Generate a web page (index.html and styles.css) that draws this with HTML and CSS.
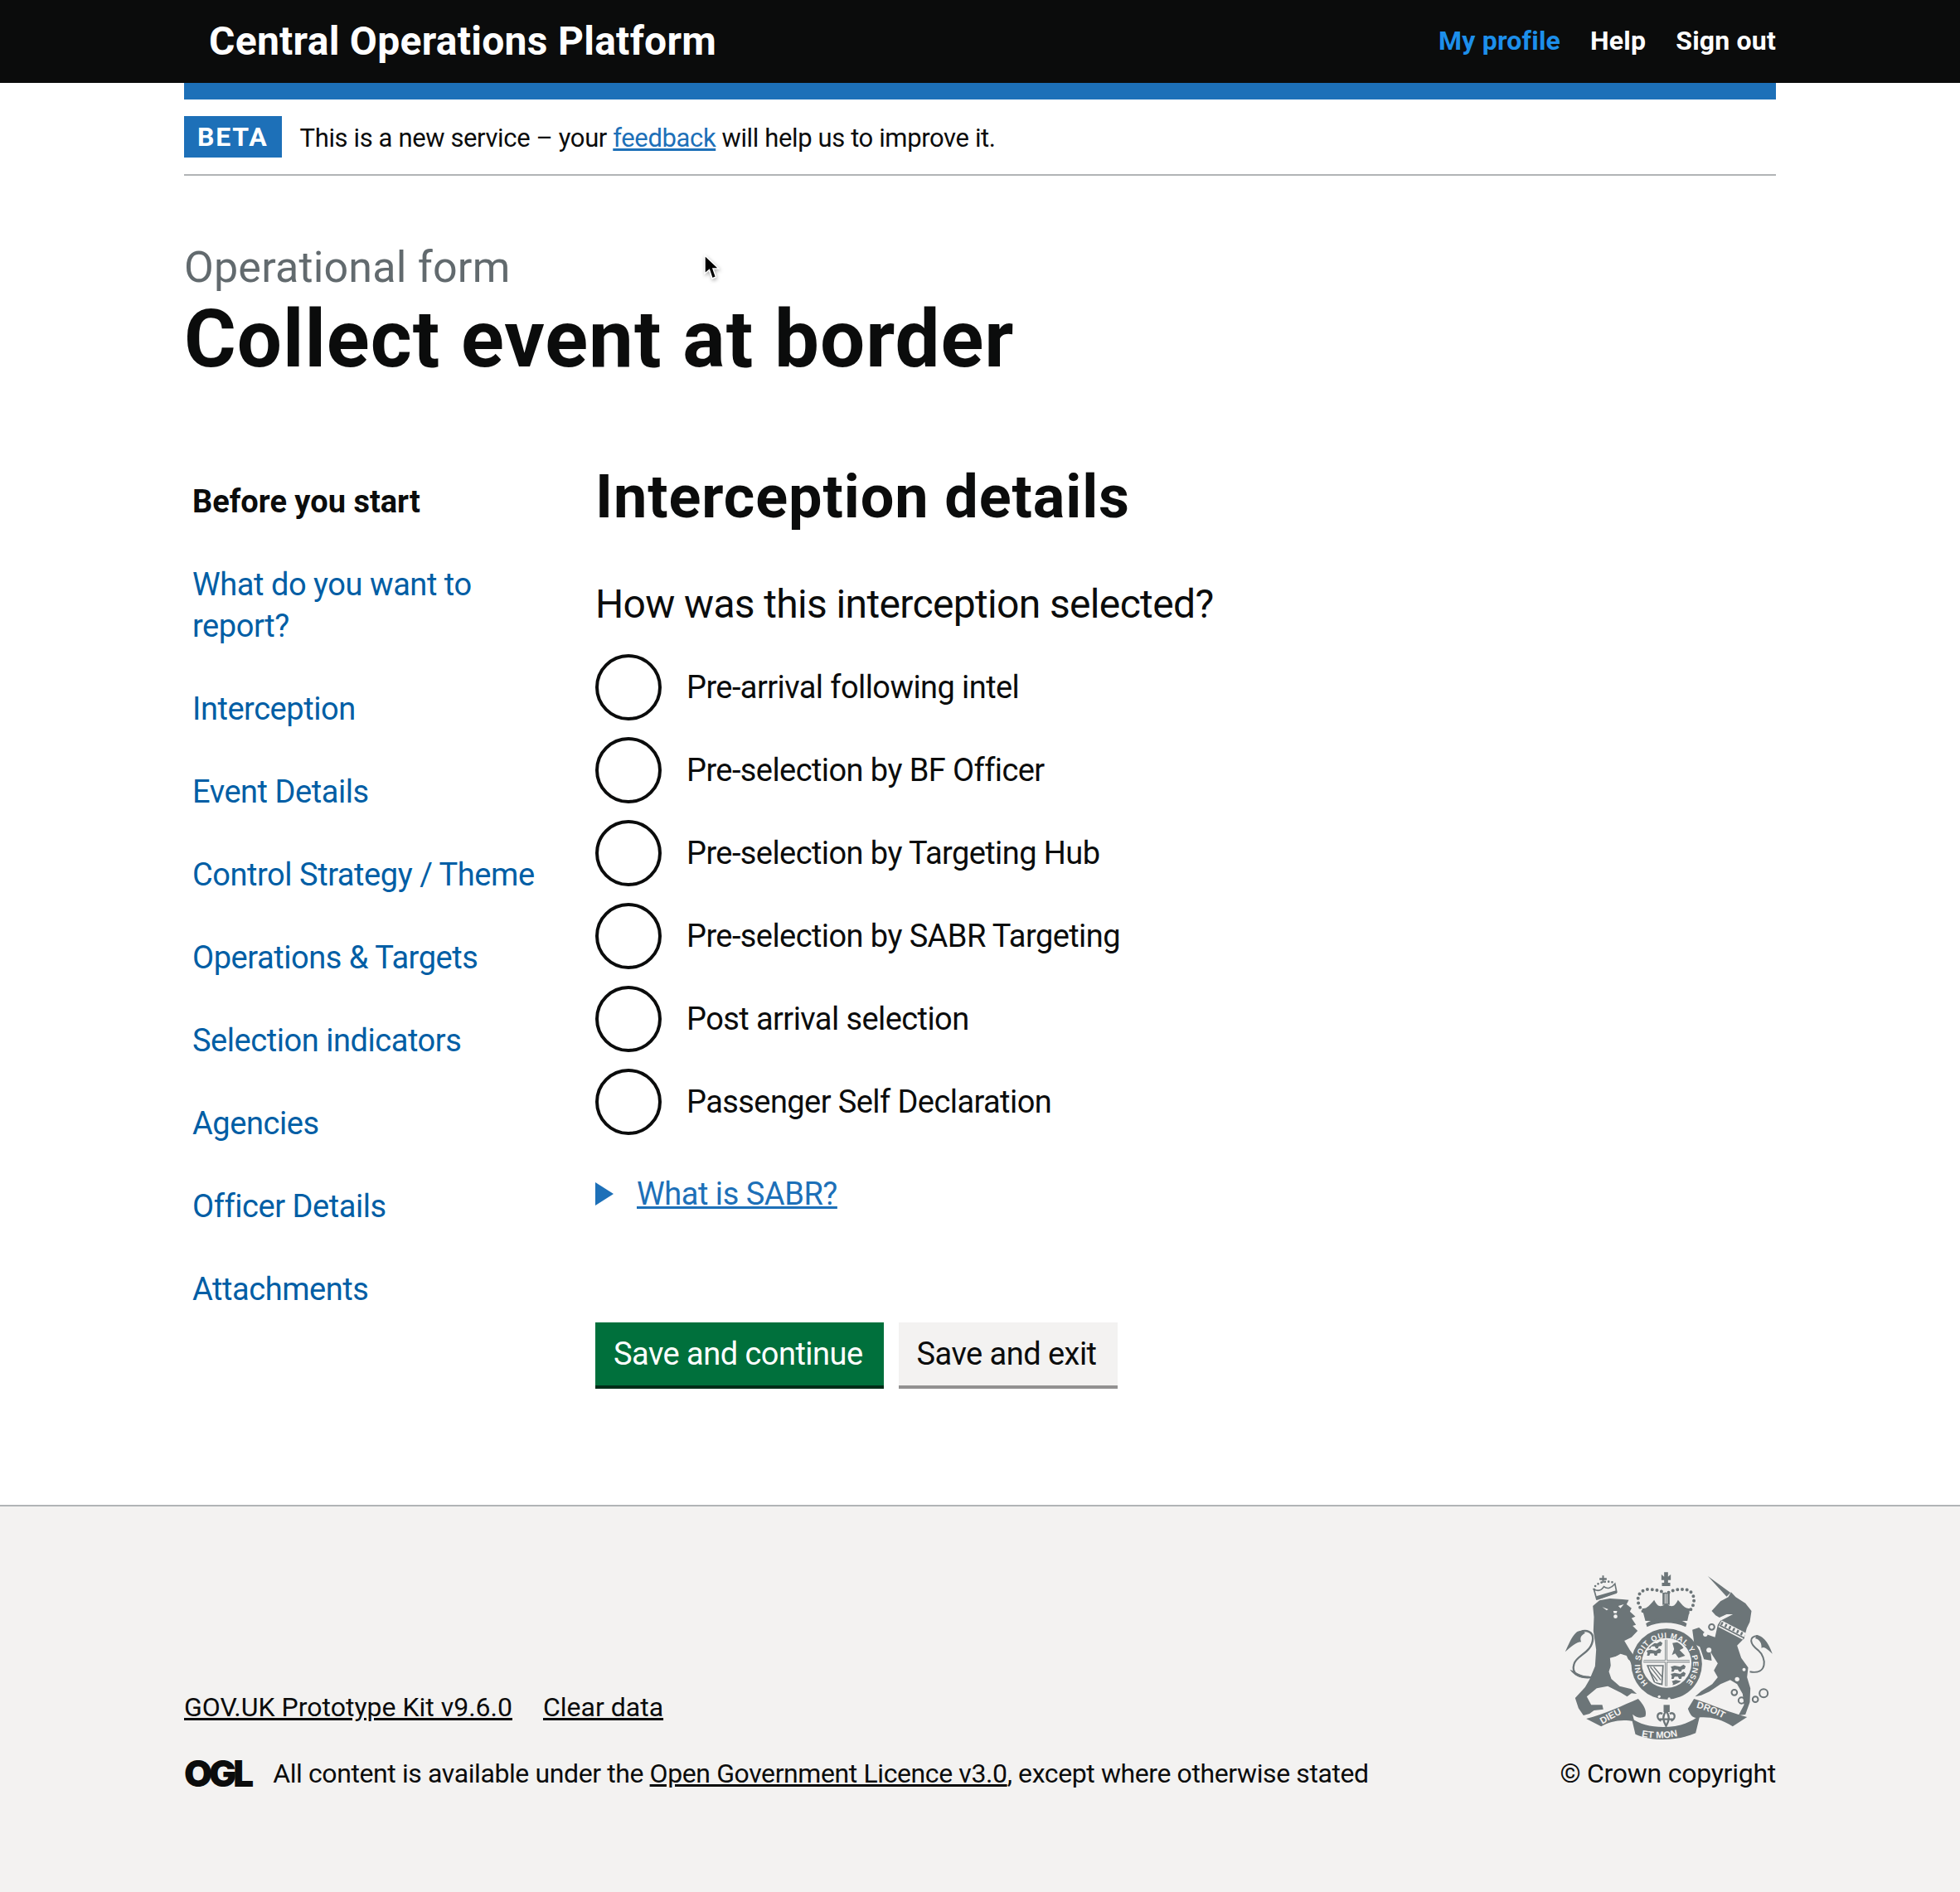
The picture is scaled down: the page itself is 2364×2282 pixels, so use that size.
FILE: index.html
```html
<!DOCTYPE html>
<html lang="en">
<head>
    <meta charset="UTF-8">
    <title>Collect event at border</title>
    <link rel="stylesheet" href="styles.css">
</head>
<body>
    <header class="top-bar">
        <div class="container top-bar-inner">
            <a class="service-name" href="#">Central Operations Platform</a>
            <nav class="top-nav">
                <a class="active" href="#">My profile</a>
                <a href="#">Help</a>
                <a href="#">Sign out</a>
            </nav>
        </div>
    </header>

    <div class="container">
        <div class="blue-strip"></div>
        <div class="phase-banner">
            <strong class="phase-tag">BETA</strong>
            <span class="phase-text">This is a new service – your <a href="#">feedback</a> will help us to improve it.</span>
        </div>

        <span class="caption">Operational form</span>
        <h1>Collect event at border</h1>

        <div class="columns">
            <nav class="side-nav">
                <strong>Before you start</strong>
                <a href="#">What do you want to report?</a>
                <a href="#">Interception</a>
                <a href="#">Event Details</a>
                <a href="#">Control Strategy / Theme</a>
                <a href="#">Operations &amp; Targets</a>
                <a href="#">Selection indicators</a>
                <a href="#">Agencies</a>
                <a href="#">Officer Details</a>
                <a href="#">Attachments</a>
            </nav>

            <main>
                <h2>Interception details</h2>
                <form>
                    <p class="legend">How was this interception selected?</p>
                    <div class="radios">
                        <label><input type="radio" name="selected"> Pre-arrival following intel</label>
                        <label><input type="radio" name="selected"> Pre-selection by BF Officer</label>
                        <label><input type="radio" name="selected"> Pre-selection by Targeting Hub</label>
                        <label><input type="radio" name="selected"> Pre-selection by SABR Targeting</label>
                        <label><input type="radio" name="selected"> Post arrival selection</label>
                        <label><input type="radio" name="selected"> Passenger Self Declaration</label>
                    </div>
                    <details>
                        <summary><span>What is SABR?</span></summary>
                    </details>
                    <div class="buttons">
                        <button type="button" class="btn-primary">Save and continue</button>
                        <button type="button" class="btn-secondary">Save and exit</button>
                    </div>
                </form>
            </main>
        </div>
    </div>

    <footer>
        <div class="container footer-inner">
            <div class="footer-left">
                <div class="footer-links">
                    <a href="#">GOV.UK Prototype Kit v9.6.0</a>
                    <a href="#">Clear data</a>
                </div>
                <div class="licence">
                    <span class="ogl">OGL</span>
                    <span>All content is available under the <a href="#">Open Government Licence v3.0</a>, except where otherwise stated</span>
                </div>
            </div>
            <div class="footer-right">
                <svg class="crest" viewBox="130 100 770 630" fill="#6c7578">
                    <defs>
                        <path id="garter" d="M437 512A96 96 0 1 1 578 506"/>
                        <path id="dieu" d="M272 660Q320 632 380 604"/>
                        <path id="etmon" d="M414 704Q500 722 592 690"/>
                        <path id="droit" d="M612 600Q680 618 742 658"/>
                        <path id="passant" d="M0 2L14-2 34 2 46-6 54 0 50 10 40 12 38 20 30 20 26 12 14 12 10 20 2 20 4 10Z"/>
                        <clipPath id="shield-clip"><circle cx="505" cy="438" r="84"/></clipPath>
                    </defs>
                    <!-- lion -->
                    <path d="M238 232L262 212 300 205 345 208 368 210 360 226 378 240 372 252 392 270 378 276 394 300 382 304 400 322 378 345 352 358 372 392 396 425 412 450 392 462 375 445 360 412 338 405 312 420 296 470 305 496 335 522 378 533 397 550 378 548 362 560 340 546 292 522 252 530 216 560 232 590 272 590 276 606 242 610 226 622 204 628 186 602 174 565 210 526 226 498 246 450 250 390 240 322 242 272Z"/>
                    <path d="M238 490C190 492 158 480 170 442 178 410 236 402 238 350 239 326 215 316 192 326" fill="none" stroke="#6c7578" stroke-width="7"/>
                    <path d="M138 398C150 372 160 345 178 328 188 320 205 320 210 330 195 338 190 348 196 362 178 362 160 380 138 398Z"/>
                    <path d="M155 462C175 470 195 486 226 486L226 494C195 496 170 484 155 462Z"/>
                    <path d="M272 236L294 244 288 248ZM330 232L350 226 338 240ZM312 250H326L324 258H314Z" fill="#f3f2f1"/>
                    <circle cx="320" cy="270" r="7" fill="#f3f2f1"/>
                    <path d="M300 420L345 408 372 430 388 470 360 445 330 490 306 480Z" fill="#f3f2f1"/>
                    <!-- lion crown -->
                    <path d="M252 208L242 172C262 182 272 172 278 162 290 172 305 168 318 152L324 182Z" fill="none" stroke="#6c7578" stroke-width="5"/>
                    <path d="M243 172C240 150 290 135 318 150" fill="none" stroke="#6c7578" stroke-width="8" stroke-linecap="round" stroke-dasharray="0 13"/>
                    <path d="M265 148H272V138H262V131H272V122H278V131H288V138H278V148Z"/>
                    <path d="M250 197L322 176 325 186 254 210Z"/>
                    <!-- unicorn -->
                    <path d="M654 124L736 184 722 198Z"/>
                    <path d="M668 250L700 215 728 200 738 182 755 200 790 222 812 250 806 290 795 312 785 350 760 375 775 420 800 455 796 490 808 530 806 580 790 625 765 628 785 590 780 550 760 515 735 500 700 515 660 542 630 555 608 560 630 540 670 515 690 490 676 465 690 440 672 412 664 398 668 430 640 425 625 380 605 370 598 318 622 310 650 335 680 345 690 300 700 285 745 262 722 262 696 274 682 266Z"/>
                    <path d="M698 296L786 342" fill="none" stroke="#f3f2f1" stroke-width="26"/>
                    <path d="M696 302L786 348" fill="none" stroke="#6c7578" stroke-width="5"/>
                    <path d="M702 294L782 335" fill="none" stroke="#6c7578" stroke-width="12" stroke-dasharray="7 9"/>
                    <g fill="none" stroke="#6c7578" stroke-width="6">
                        <circle cx="668" cy="308" r="10"/>
                        <circle cx="750" cy="545" r="10"/>
                        <circle cx="776" cy="574" r="11"/>
                        <circle cx="826" cy="570" r="10"/>
                        <circle cx="856" cy="548" r="15"/>
                        <path d="M806 470C870 482 868 420 836 392 806 370 800 342 834 340"/>
                    </g>
                    <g fill="#f3f2f1">
                        <circle cx="645" cy="335" r="8"/>
                        <circle cx="658" cy="392" r="9"/>
                        <circle cx="790" cy="415" r="10"/>
                        <circle cx="760" cy="497" r="8"/>
                        <circle cx="785" cy="462" r="6"/>
                    </g>
                    <path d="M830 337C860 340 878 378 888 405 870 390 860 376 848 384 850 370 842 352 826 350Z"/>
                    <!-- royal crown -->
                    <path d="M432 262C388 232 392 172 440 172 470 172 495 180 503 192 515 176 545 170 570 172 612 176 616 232 576 262" fill="none" stroke="#6c7578" stroke-width="12" stroke-linecap="round" stroke-dasharray="0 17"/>
                    <path d="M496 110H510V126L520 118V138H510V148H518V160H488V148H496V138H486V118L496 126Z"/>
                    <path d="M490 184H516V228H490Z"/>
                    <path d="M498 188H501V224H498ZM505 188H508V224H505Z" fill="#f3f2f1"/>
                    <path d="M416 240C430 244 440 234 460 210 472 234 482 240 503 222 524 240 534 234 546 210 566 234 576 244 590 240L580 286H428Z"/>
                    <path d="M430 296C470 268 540 268 578 296L574 308C530 288 475 288 434 308Z"/>
                    <!-- shield and garter -->
                    <circle cx="505" cy="442" r="128"/>
                    <circle cx="505" cy="438" r="90" fill="#f3f2f1"/>
                    <g clip-path="url(#shield-clip)">
                        <use href="#passant" x="436" y="366"/>
                        <use href="#passant" x="432" y="392"/>
                        <use href="#passant" x="520" y="450"/>
                        <use href="#passant" x="520" y="476"/>
                        <use href="#passant" x="524" y="502"/>
                        <path d="M526 366L552 362 566 384 552 392 572 412 548 420 536 404 524 410 532 388Z"/>
                        <path d="M436 448H492L488 516 462 510Z" fill="none" stroke="#6c7578" stroke-width="5"/>
                        <path d="M446 452L484 500M458 452L490 490M444 468L472 504" stroke="#6c7578" stroke-width="4"/>
                        <path d="M410 432H600M503 340V540" stroke="#6c7578" stroke-width="9"/>
                        <path d="M410 432H600M503 340V540" stroke="#f3f2f1" stroke-width="4"/>
                    </g>
                    <text class="crest-text garter-text"><textPath href="#garter" textLength="448" lengthAdjust="spacing">HONI SOIT QUI MAL Y PENSE</textPath></text>
                    <circle cx="478" cy="560" r="5" fill="#f3f2f1"/>
                    <circle cx="514" cy="568" r="5" fill="#f3f2f1"/>
                    <!-- motto scroll -->
                    <path d="M214 640C280 624 350 590 402 568 418 585 436 610 428 632 410 640 396 636 382 624L388 650C340 640 300 650 268 668Z"/>
                    <path d="M378 638C430 680 560 686 626 626L610 692C540 722 450 722 392 696Z"/>
                    <path d="M582 604L604 568C670 590 740 620 796 634L744 668C700 640 660 632 618 636 600 640 590 626 582 604Z"/>
                    <path d="M494 590H516V616H494Z"/>
                    <path d="M503 612C490 630 490 642 503 666 516 642 516 630 503 612ZM490 622C470 612 465 640 485 648M516 622C536 612 541 640 521 648M478 642H528" fill="none" stroke="#6c7578" stroke-width="7"/>
                    <text class="crest-text scroll-text"><textPath href="#dieu">DIEU</textPath></text>
                    <text class="crest-text scroll-text"><textPath href="#etmon">ET MON</textPath></text>
                    <text class="crest-text scroll-text"><textPath href="#droit">DROIT</textPath></text>
                </svg>
                <span class="copyright">© Crown copyright</span>
            </div>
        </div>
    </footer>

    <!-- mouse pointer caught in the screenshot -->
    <svg class="pointer" viewBox="0 0 20 34">
        <path d="M2 2V24L7.500 19.500 11 30 15.500 28 12 18H19Z" fill="#000" stroke="#fff" stroke-width="1.500"/>
    </svg>
</body>
</html>
```

FILE: styles.css
```css
body {
    margin: 0;
    min-height: 100vh;
    display: flex;
    flex-direction: column;
    font-family: Roboto, Arial, sans-serif;
    font-size: 38px;
    line-height: 50px;
    color: #0b0c0c;
    background: #fff;
    position: relative;
}
a {
    color: #1d70b8;
}
.container {
    width: 1920px;
    margin: 0 auto;
}
.top-bar {
    background: #0b0c0c;
    height: 100px;
}
.top-bar-inner {
    display: flex;
    align-items: center;
    justify-content: space-between;
    height: 100px;
}
.service-name {
    margin-left: 30px;
    font-size: 48px;
    font-weight: 700;
    letter-spacing: .28px;
    color: #fff;
    text-decoration: none;
}
.top-nav {
    display: flex;
    gap: 36px;
    padding-bottom: 3px;
    font-size: 32px;
    font-weight: 700;
    letter-spacing: .2px;
}
.top-nav a {
    color: #fff;
    text-decoration: none;
}
.top-nav a.active {
    color: #1d8feb;
}
.blue-strip {
    height: 20px;
    background: #1d70b8;
}
.phase-banner {
    display: flex;
    align-items: center;
    gap: 22px;
    padding: 20px 0;
    border-bottom: 2px solid #b1b4b6;
    font-size: 31px;
    letter-spacing: -.38px;
}
.phase-text {
    padding-top: 4px;
    line-height: 46px;
}
.phase-tag {
    background: #1d70b8;
    color: #fff;
    padding: 0 16px;
    height: 50px;
    font-size: 32px;
    line-height: 50px;
    letter-spacing: 1.8px;
}
.caption {
    display: block;
    margin-top: 81px;
    font-size: 52px;
    line-height: 60px;
    letter-spacing: .2px;
    color: #626a6e;
}
h1 {
    margin: 6px 0 101px;
    font-size: 96px;
    line-height: 100px;
    letter-spacing: 1px;
}
.columns {
    display: grid;
    grid-template-columns: 496px 1fr;
    padding-bottom: 144px;
}
.side-nav {
    display: flex;
    flex-direction: column;
    gap: 50px;
    padding: 20px 0 0 10px;
}
.side-nav a {
    color: #005ea5;
    letter-spacing: -.45px;
    text-decoration: none;
}
.side-nav a:first-of-type {
    max-width: 400px;
}
h2 {
    margin: 0;
    font-size: 72px;
    line-height: 80px;
    letter-spacing: .9px;
}
.legend {
    margin: 64px 0 35px;
    font-size: 48px;
    line-height: 50px;
    letter-spacing: -.65px;
}
.radios {
    display: flex;
    flex-direction: column;
    gap: 20px;
}
.radios label {
    display: flex;
    align-items: center;
    gap: 30px;
    height: 80px;
    letter-spacing: -.58px;
}
.radios input {
    appearance: none;
    flex: none;
    width: 80px;
    height: 80px;
    margin: 0;
    border: 4px solid #0b0c0c;
    border-radius: 50%;
    background: #fff;
}
details {
    margin-top: 46px;
}
summary {
    display: flex;
    align-items: center;
    gap: 28px;
    color: #1d70b8;
    letter-spacing: -.46px;
    list-style: none;
}
summary::before {
    content: "";
    border-left: 22px solid #1d70b8;
    border-top: 14px solid transparent;
    border-bottom: 14px solid transparent;
}
summary span {
    text-decoration: underline;
}
.buttons {
    display: flex;
    gap: 18px;
    margin-top: 130px;
}
button {
    height: 76px;
    padding: 0 25px 0 22px;
    border: none;
    font-family: inherit;
    font-size: 38px;
    letter-spacing: -.53px;
    cursor: pointer;
}
.btn-primary {
    background: #00703c;
    color: #fff;
    box-shadow: 0 4px 0 #002d18;
}
.btn-secondary {
    background: #f3f2f1;
    color: #0b0c0c;
    box-shadow: 0 4px 0 #929191;
}
footer {
    flex: 1;
    background: #f3f2f1;
    border-top: 2px solid #b1b4b6;
    font-size: 32px;
    line-height: 40px;
}
footer a {
    color: #0b0c0c;
}
.footer-inner {
    display: flex;
    justify-content: space-between;
    align-items: flex-end;
    padding: 76px 0 122px;
}
.footer-links {
    display: flex;
    gap: 37px;
    margin-bottom: 40px;
}
.licence {
    display: flex;
    align-items: center;
    gap: 27px;
    letter-spacing: -.4px;
}
.ogl {
    font-family: Inter, sans-serif;
    font-size: 44px;
    font-weight: 900;
    letter-spacing: -4px;
}
.footer-right {
    display: flex;
    flex-direction: column;
    align-items: flex-end;
    gap: 16px;
}
.copyright {
    letter-spacing: -.26px;
}
.crest {
    display: block;
    width: 257px;
    height: 210px;
}
.crest-text {
    fill: #f3f2f1;
    font-family: "Liberation Sans", Arial, sans-serif;
    font-weight: 700;
}
.garter-text {
    font-size: 28px;
}
.scroll-text {
    font-size: 34px;
}
.pointer {
    position: absolute;
    left: 848px;
    top: 306px;
    width: 20px;
    height: 34px;
    filter: drop-shadow(1px 2px 2px rgba(0, 0, 0, 0.3));
}
```
